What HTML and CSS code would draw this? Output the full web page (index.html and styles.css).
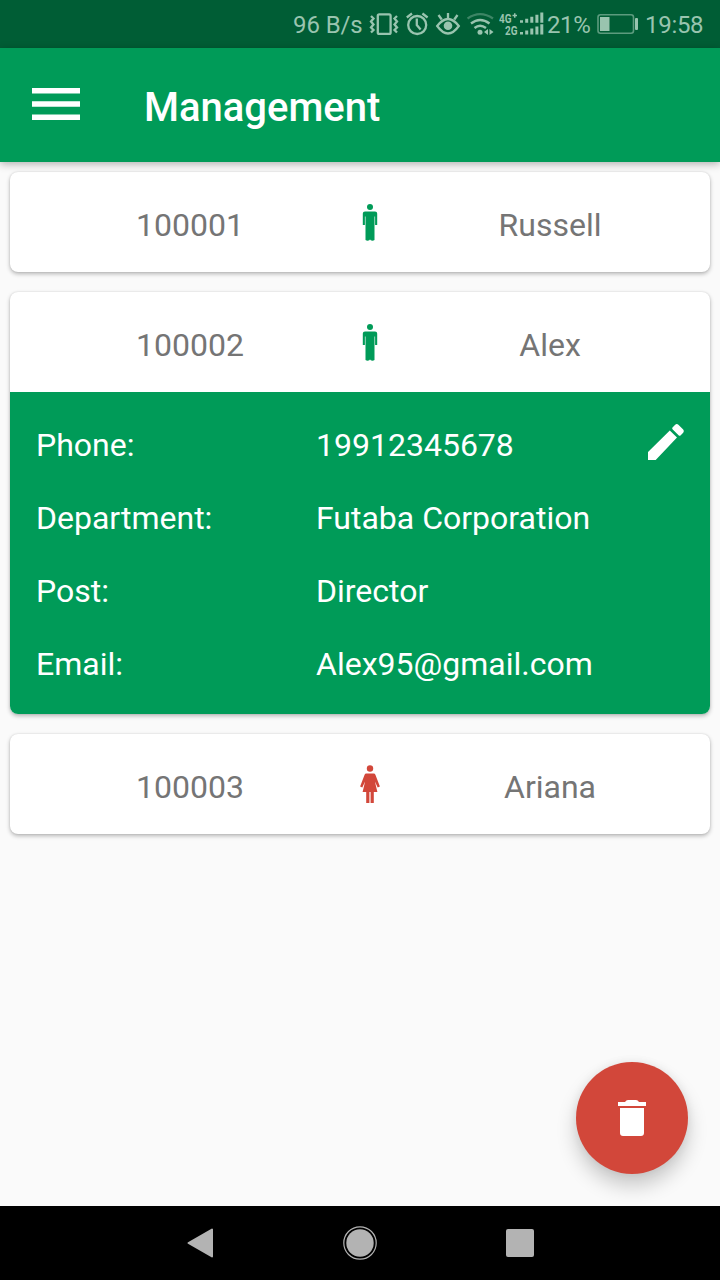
FILE: index.html
```html
<!DOCTYPE html>
<html lang="en">
<head>
<meta charset="utf-8">
<title>Management</title>
<link rel="stylesheet" href="styles.css">
</head>
<body>
<div class="screen">
  <div class="status">
    <span class="speed">96 B/s</span>
    <svg class="vibrate" width="30" height="48" viewBox="369 0 30 48" fill="none" stroke="currentColor" stroke-width="2.300">
      <rect x="377.800" y="14.300" width="12.800" height="19.600" rx="1.500"/>
      <path d="M371 16l2.500 2.500-2.500 3 2.500 3-2.500 3 2.500 2.500-2.500 2.500M397 16l-2.500 2.500 2.500 3-2.500 3 2.500 3-2.500 2.500 2.500 2.500"/>
    </svg>
    <svg class="alarm" width="24" height="48" viewBox="405 0 24 48" fill="none" stroke="currentColor" stroke-width="2.300">
      <circle cx="417.200" cy="25" r="9"/>
      <path d="M416.800 18.500v6.500l3.800 4.500M406.800 17.500l5.200-4M427.600 17.500l-5.200-4"/>
    </svg>
    <svg class="eye" width="26" height="48" viewBox="435 0 26 48" fill="none" stroke="currentColor" stroke-width="2.300">
      <path d="M437.200 26q10.800-14 21.600 0q-10.800 15-21.600 0z"/>
      <path d="M448 13v6M438.500 15l3.200 4.500M457.500 15l-3.200 4.500"/>
      <circle cx="448" cy="25.700" r="4.300" fill="currentColor" stroke="none"/>
    </svg>
    <svg class="wifi" width="28" height="48" viewBox="467 0 28 48" fill="none" stroke="currentColor" stroke-width="2.400">
      <path class="weak" d="M467.500 18.500q12.500-8.800 25.500 0"/>
      <path d="M471 23.500q9-7 18.500 0M474.500 28q5.500-4.500 11.500 0"/>
      <circle cx="480" cy="32.300" r="2.500" fill="currentColor" stroke="none"/>
      <path d="M488 29v6l-4-3zM489.500 29v6l4-3z" fill="currentColor" stroke="none"/>
    </svg>
    <svg class="cell" width="46" height="48" viewBox="499 0 46 48" fill="currentColor">
      <text class="net" x="499" y="22.600" textLength="12.500" lengthAdjust="spacingAndGlyphs">4G</text>
      <text class="net" x="505" y="34.600" textLength="12.500" lengthAdjust="spacingAndGlyphs">2G</text>
      <path d="M512.500 15.500h4.500M514.750 13.200v4.600" stroke="currentColor" stroke-width="1.500"/>
      <path d="M520 20.200h3v2.500h-3zM525.200 18.800h3v3.900h-3zM530.300 16.800h3v5.900h-3zM535.400 14.800h3v7.900h-3zM540.300 12.500h3v10.200h-3zM520 32h3v2.500h-3zM525.200 30.600h3v3.900h-3zM530.300 28.600h3v5.900h-3zM535.400 26.600h3v7.900h-3zM540.300 24.300h3v10.200h-3z"/>
    </svg>
    <span class="percent">21%</span>
    <svg class="battery" width="42" height="48" viewBox="597 0 42 48" fill="currentColor">
      <rect class="case" x="598" y="14.700" width="35.500" height="18.600" rx="2.500" fill="none" stroke="currentColor" stroke-width="1.600"/>
      <rect x="600" y="17" width="9.500" height="14"/>
      <rect x="635" y="18" width="3" height="12" rx="1"/>
    </svg>
    <span class="clock">19:58</span>
  </div>

  <header class="appbar">
    <svg width="48" height="32" viewBox="0 0 48 32" fill="#fff"><path d="M0 0h48v5.500H0zM0 13.200h48v5.500H0zM0 26.500h48V32H0z"/></svg>
    <h1 class="title">Management</h1>
  </header>

  <main class="list">
    <section class="card">
      <div class="summary">
        <span class="cell-text">100001</span>
        <svg class="person" width="20" height="40" viewBox="0 0 20 40"><circle cx="10" cy="4" r="3"/><path d="M5 8.500h10q2.200 0 2.200 2V22h-2.100V13.500h-.6V37q-2 1.500-4.200 0v-.5h-.6v.5q-2.200 1.500-4.200 0V13.500H4.900V22H2.800V10.500q0-2 2.200-2z"/></svg>
        <span class="cell-text">Russell</span>
      </div>
    </section>

    <section class="card">
      <div class="summary">
        <span class="cell-text">100002</span>
        <svg class="person" width="20" height="40" viewBox="0 0 20 40"><circle cx="10" cy="4" r="3"/><path d="M5 8.500h10q2.200 0 2.200 2V22h-2.100V13.500h-.6V37q-2 1.500-4.200 0v-.5h-.6v.5q-2.200 1.500-4.200 0V13.500H4.900V22H2.800V10.500q0-2 2.200-2z"/></svg>
        <span class="cell-text">Alex</span>
      </div>
      <div class="details">
        <dl class="fields">
          <dt>Phone:</dt><dd>19912345678</dd>
          <dt>Department:</dt><dd>Futaba Corporation</dd>
          <dt>Post:</dt><dd>Director</dd>
          <dt>Email:</dt><dd>Alex95@gmail.com</dd>
        </dl>
        <svg class="edit" width="48" height="48" viewBox="0 0 48 48" fill="#fff"><path d="M6 42v-8L27.800 12.400l7.200 7.200L13.700 42zM30.500 11.200q-.7-.9 0-1.700l2.700-2.700q1.600-1.400 3.200 0l4.800 4.800q1.400 1.600 0 3.200l-2.700 2.700q-.8.700-1.700 0z"/></svg>
      </div>
    </section>

    <section class="card">
      <div class="summary">
        <span class="cell-text">100003</span>
        <svg class="person" width="20" height="40" viewBox="0 0 20 40"><g class="female"><circle cx="10" cy="3.500" r="3.200"/><path d="M6.300 8.500h7.400q1.300 0 1.700 1.200L19.900 21.500l-2.200 1-2.800-6 2.500 10.500h-3.600v11h-3.200V27h-1.200v11H6.200V27H2.600l2.500-10.500-2.800 6-2.200-1L4.600 9.700Q5 8.500 6.300 8.500z"/></g></svg>
        <span class="cell-text">Ariana</span>
      </div>
    </section>
  </main>

  <button class="fab" aria-label="Delete">
    <svg width="48" height="48" viewBox="0 0 24 24" fill="#fff"><path d="M6 19.500c0 .9.600 1.500 1.500 1.500h9c.9 0 1.500-.6 1.500-1.500V7H6v12.500zM19 4h-3.500q-.6-1-1.500-1h-4q-.9 0-1.500 1H5v2h14V4z"/></svg>
  </button>

  <nav class="navbar">
    <svg width="28" height="32" viewBox="0 0 28 32"><path d="M2.500 16L26 2.500v27z" fill="#b3b3b3" stroke="#b3b3b3" stroke-width="2" stroke-linejoin="round"/></svg>
    <svg width="34" height="34" viewBox="0 0 34 34"><circle cx="17" cy="17" r="13.700" fill="#b3b3b3"/><circle cx="17" cy="17" r="16.200" fill="none" stroke="#b3b3b3" stroke-width="1.200"/></svg>
    <svg width="28" height="28" viewBox="0 0 28 28"><rect width="28" height="28" rx="2" fill="#b3b3b3"/></svg>
  </nav>
</div>
</body>
</html>
```
FILE: styles.css
```css
* { box-sizing: border-box; }
body { margin: 0; font-family: Roboto, "Liberation Sans", sans-serif; }
svg { display: block; flex: none; }

.screen {
  position: relative;
  display: flex;
  flex-direction: column;
  width: 720px;
  height: 1280px;
  background: #fafafa;
  overflow: hidden;
}

.status {
  display: flex;
  flex: none;
  height: 48px;
  padding-left: 293px;
  background: #005d35;
  color: #99c4af;
  font-size: 24px;
  line-height: 50px;
  white-space: nowrap;
}
.speed { width: 76px; letter-spacing: -.1px; }
.vibrate { margin-right: 6px; }
.alarm { margin-right: 6px; }
.eye { margin-right: 6px; }
.wifi { margin-right: 4px; }
.cell { margin-right: 2px; }
.percent { width: 50px; letter-spacing: -.4px; }
.battery { margin-right: 6px; }
.clock { letter-spacing: -.3px; }
.weak { opacity: .4; }
.case { opacity: .6; }
.net { font: bold 12px Roboto, sans-serif; }

.appbar {
  position: relative;
  z-index: 1;
  display: flex;
  flex: none;
  align-items: center;
  gap: 64px;
  height: 114px;
  padding: 0 32px 2px;
  background: #009b58;
  box-shadow: 0 2px 8px rgba(0, 0, 0, .3);
}
.title {
  margin: 8px 0 0;
  color: #fff;
  font-size: 40px;
  font-weight: 500;
  line-height: 48px;
}

.list {
  display: flex;
  flex: 1;
  flex-direction: column;
  gap: 20px;
  padding: 10px;
}
.card {
  background: #fff;
  border-radius: 8px;
  box-shadow: 0 2px 4px rgba(0, 0, 0, .27), 0 0 2px rgba(0, 0, 0, .12);
}
.summary {
  display: grid;
  grid-template-columns: repeat(3, 180px);
  align-items: center;
  justify-items: center;
  height: 100px;
  padding-left: 90px;
  color: #757575;
  font-size: 32px;
}
.cell-text { padding-top: 6px; }
.person { margin-top: 2px; fill: #009b58; }
.female { fill: #d2473a; }

.details {
  display: flex;
  justify-content: space-between;
  height: 322px;
  padding: 16px 20px 0 26px;
  background: #009b58;
  border-radius: 0 0 8px 8px;
}
.fields {
  display: grid;
  grid-template-columns: 280px auto;
  grid-auto-rows: 73px;
  margin: 0;
  color: #fff;
  font-size: 32px;
  line-height: 74px;
}
.fields dd { margin: 0; }
.edit { margin-top: 10px; }

.fab {
  position: absolute;
  left: 576px;
  top: 1062px;
  display: flex;
  align-items: center;
  justify-content: center;
  width: 112px;
  height: 112px;
  padding: 0;
  border: 0;
  border-radius: 50%;
  background: #d2473a;
  box-shadow: 0 12px 20px rgba(0, 0, 0, .2), 0 0 10px rgba(0, 0, 0, .07);
}

.navbar {
  display: flex;
  flex: none;
  align-items: center;
  justify-content: space-between;
  height: 74px;
  padding: 0 186px;
  background: #000;
}
```
